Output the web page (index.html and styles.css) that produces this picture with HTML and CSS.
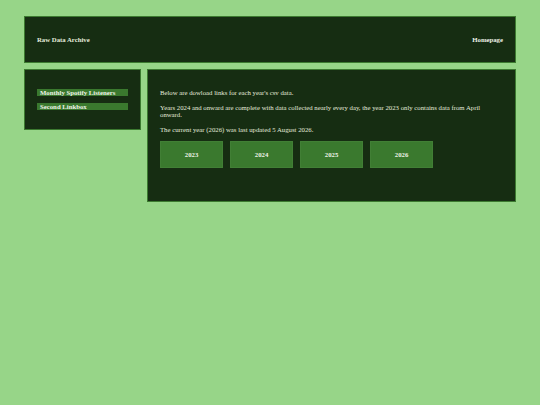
FILE: index.html
```html
<!DOCTYPE html>
<html>
<head>
<meta charset="utf-8">
<link rel="stylesheet" href="styles.css">
</head>
<body>
<header class="topbar">
  <span class="brand">Raw Data Archive</span>
  <a class="home" href="#">Homepage</a>
</header>
<div class="layout">
  <nav class="sidebar">
    <a class="navlink" href="#">Monthly Spotify Listeners</a>
    <a class="navlink" href="#">Second Linkbox</a>
  </nav>
  <main class="content">
    <p>Below are dowload links for each year's csv data.</p>
    <p>Years 2024 and onward are complete with data collected nearly every day, the year 2023 only contains data from April onward.</p>
    <p>The current year (2026) was last updated 5 August 2026.</p>
    <div class="years">
      <a class="year" href="#">2023</a>
      <a class="year" href="#">2024</a>
      <a class="year" href="#">2025</a>
      <a class="year" href="#">2026</a>
    </div>
  </main>
</div>
</body>
</html>
```
FILE: styles.css
```css
html, body {
  margin: 0;
  padding: 0;
}
body {
  background: #97d588;
  font-family: "Liberation Serif", "Times New Roman", serif;
  font-size: 6.75px;
  color: #e4ebdc;
  padding: 16px 24px;
  line-height: 7.5px;
}
a {
  color: #eef3e8;
  text-decoration: none;
}
.topbar {
  height: 45px;
  background: #162d12;
  border: 1px solid #3c7a30;
  display: flex;
  align-items: center;
  justify-content: space-between;
  padding: 0 12px;
  font-weight: bold;
}
.layout {
  display: flex;
  gap: 6px;
  margin-top: 6px;
  align-items: flex-start;
}
.sidebar {
  width: 91px;
  background: #162d12;
  border: 1px solid #3c7a30;
  padding: 19px 12px;
  display: flex;
  flex-direction: column;
  gap: 7px;
}
.navlink {
  background: #3a792e;
  font-weight: bold;
  padding: 0 3px;
  height: 7px;
  line-height: 7.5px;
}
.content {
  flex: 1;
  background: #162d12;
  border: 1px solid #3c7a30;
  padding: 19px 12px 33px;
}
.content p {
  margin: 0 0 7px;
  padding-right: 20px;
}
.years {
  display: flex;
  gap: 7px;
  margin-top: 8px;
}
.year {
  width: 61px;
  height: 25px;
  background: #3a792e;
  border: 1px solid #417f35;
  display: flex;
  align-items: center;
  justify-content: center;
  font-weight: bold;
}
```
